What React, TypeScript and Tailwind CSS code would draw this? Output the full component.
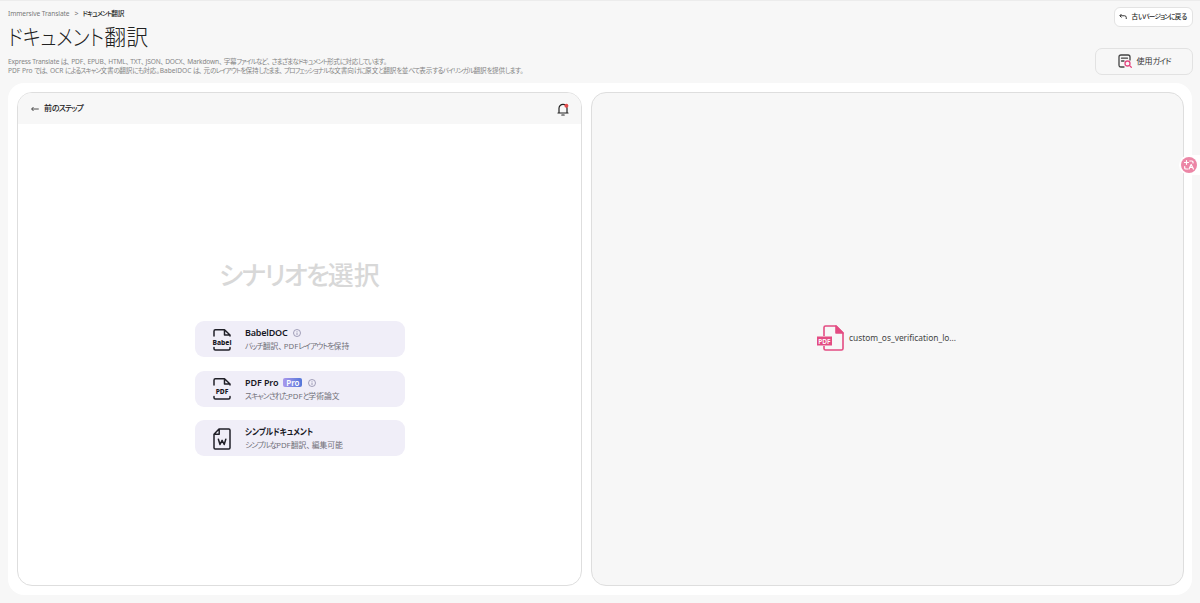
import type { ReactNode } from "react";

/** Sets kana runs tighter than the kanji and Latin text around them. */
function Ja({ children }: { children: string }) {
  const runs = children.split(/([ぁ-んァ-ヶー]+|、)/).filter(Boolean);
  return (
    <span>
      {runs.map((run, i) =>
        run === "、" ? (
          <span key={i} className="tracking-[-0.3em] [font-feature-settings:'palt'_0]">{run}</span>
        ) : /[ぁ-んァ-ヶー]/.test(run) ? (
          <span key={i} className="tracking-[-0.125em]">{run}</span>
        ) : (
          run
        ),
      )}
    </span>
  );
}

function InfoIcon() {
  return (
    <svg className="h-2 w-2 shrink-0" viewBox="0 0 16 16" fill="none" stroke="#8784a4" strokeWidth="1.5">
      <circle cx="8" cy="8" r="7" />
      <path d="M8 7v5M8 4v1.5" />
    </svg>
  );
}

function FoldedFile({ label }: { label: string }) {
  return (
    <svg className="h-6 w-[22px] shrink-0" viewBox="0 0 22 24" fill="none" stroke="#202028" strokeWidth="1.5" strokeLinejoin="round" strokeLinecap="round">
      <path d="M3 8V3.2Q3 1.8 4.4 1.8H13.5L19 7V8M13.5 2V7H19M3 19.5V20.8Q3 22 4.4 22H17.6Q19 22 19 20.8V19.5" />
      <text x="11" y="17.2" textAnchor="middle" fill="#17171f" stroke="none" fontFamily="Noto Sans, sans-serif" fontWeight="800" fontSize="6.7">
        {label}
      </text>
    </svg>
  );
}

function WordFile() {
  return (
    <svg className="h-6 w-[22px] shrink-0" viewBox="0 0 22 24" fill="none" stroke="#202028" strokeWidth="1.5" strokeLinejoin="round" strokeLinecap="round">
      <path d="M8 2H17.8Q19 2 19 3.2V20.8Q19 22 17.8 22H4.2Q3 22 3 20.8V7.2ZM8.2 2V7.3H3" />
      <path d="M7.4 12.2L9 17.5L11.1 13.4L13.2 17.5L14.8 12.2" />
    </svg>
  );
}

function Option({ icon, title, sub }: { icon: ReactNode; title: ReactNode; sub: string }) {
  return (
    <button className="flex h-9 w-[210px] items-center rounded-[9px] bg-[#f0eef8] pl-4 pt-px text-left">
      {icon}
      <span className="ml-3 flex flex-col">
        <span className="flex h-3.5 items-center whitespace-nowrap text-[9px] font-semibold leading-[14px] text-[#17171f]">{title}</span>
        <span className="h-[13px] whitespace-nowrap text-[7.8px] leading-[13px] text-[#717078]"><Ja>{sub}</Ja></span>
      </span>
    </button>
  );
}

export default function App() {
  return (
    <div className="flex h-[603px] w-[1200px] flex-col overflow-hidden border-t border-[#ececec] bg-[#f7f7f7] px-2 font-['Noto_Sans','Noto_Sans_CJK_JP',sans-serif] [font-feature-settings:'palt']">
      <header className="flex h-[82px] shrink-0 justify-between">
        <div className="pt-2">
          <nav className="flex h-[10px] items-center whitespace-nowrap text-[6.6px] leading-[10px] text-[#777]">
            <span className="tracking-[-0.08px]">Immersive Translate</span>
            <span className="ml-[5px] mr-1 text-[7px]">&gt;</span>
            <span className="font-medium text-[#222]"><Ja>ドキュメント翻訳</Ja></span>
          </nav>
          <h1 className="h-[34px] whitespace-nowrap text-[22px] font-light leading-[34px] text-[#222]">
            <span className="-mr-[16px] inline-block origin-left scale-x-[0.855]">ドキュメント</span>翻訳
          </h1>
          <p className="mt-[4px] whitespace-nowrap text-[6.6px] leading-[9px] text-[#858585]">
            <span className="block tracking-[-0.16px]"><Ja>Express Translate は、PDF、EPUB、HTML、TXT、JSON、DOCX、Markdown、字幕ファイルなど、さまざまなドキュメント形式に対応しています。</Ja></span>
            <span className="block"><Ja>PDF Pro では、OCR によるスキャン文書の翻訳にも対応。BabelDOC は、元のレイアウトを保持したまま、プロフェッショナルな文書向けに原文と翻訳を並べて表示するバイリンガル翻訳を提供します。</Ja></span>
          </p>
        </div>
        <div className="-mr-[0.5px] flex flex-col items-end pt-[6px]">
          <button className="flex h-5 w-[79px] items-center whitespace-nowrap rounded-[6px] border border-[#e3e3e3] bg-white pl-1 text-[6.6px] font-medium text-[#222]">
            <svg className="mr-[5px] h-2 w-2 shrink-0" viewBox="0 0 16 16" fill="none" stroke="#222" strokeWidth="1.8">
              <path d="M5 2L1.5 5.5L5 9M2 5.5H11Q14.5 5.5 14.5 9V12" />
            </svg>
            <Ja>古いバージョンに戻る</Ja>
          </button>
          <button className="mt-[21px] flex h-[27px] w-[98px] items-center whitespace-nowrap rounded-[7px] border border-[#e2e2e2] pb-[2px] pl-[22px] text-[8px] text-[#333]">
            <svg className="mr-[5px] mt-px h-[14px] w-[14px] shrink-0" viewBox="0 0 14 14" fill="none" stroke="#444" strokeWidth="1.3" strokeLinecap="round">
              <path d="M6 13H3Q1 13 1 11V3Q1 1 3 1H10Q12 1 12 3V6M3.5 4.2H9.5M3.5 7H6" />
              <path d="M11.4 11.4L13.3 13.3" stroke="#e34880" />
              <circle cx="9.5" cy="9.5" r="2.5" stroke="#e34880" />
            </svg>
            <Ja>使用ガイド</Ja>
          </button>
        </div>
      </header>

      <main className="flex h-[512px] shrink-0 gap-[9px] rounded-[16px] bg-white py-[9px] pl-[9px] pr-[8.5px]">
        <section className="flex w-[565px] shrink-0 flex-col overflow-hidden rounded-[15px] border border-[#dedede]">
          <div className="flex h-[31px] shrink-0 items-center justify-between bg-[#f7f7f7] px-[13px]">
            <button className="flex items-center whitespace-nowrap text-[8px] font-medium text-[#222]">
              <svg className="mr-[5px] h-2 w-2" viewBox="0 0 16 16" fill="none" stroke="#222" strokeWidth="1.6">
                <path d="M5 4L1.2 8L5 12M1.5 8H15.5" />
              </svg>
              <span className="-mt-px"><Ja>前のステップ</Ja></span>
            </button>
            <svg className="-mr-px mt-px h-[13px] w-3" viewBox="0 0 12 13" fill="none" stroke="#222" strokeWidth="1.2" strokeLinecap="round" strokeLinejoin="round">
              <path d="M2 10V5.3A4 4 0 0 1 10 5.3V10M1 10H11M4.8 12H7.2" />
              <circle cx="9.4" cy="2.7" r="2" fill="#e34c4c" stroke="none" />
            </svg>
          </div>
          <div className="flex flex-1 flex-col items-center pt-[131px]">
            <h2 className="h-10 whitespace-nowrap text-[26px] font-medium leading-10 text-[#d8d8d8]">
              <span className="tracking-[-1.9px]">シナリオを</span>選択
            </h2>
            <div className="ml-px mt-[26px] flex flex-col gap-[13.5px]">
              <Option
                icon={<FoldedFile label="Babel" />}
                title={<><span className="mr-[6px] tracking-[-0.2px]">BabelDOC</span><InfoIcon /></>}
                sub="バッチ翻訳、PDFレイアウトを保持"
              />
              <Option
                icon={<FoldedFile label="PDF" />}
                title={<><span className="mr-[5px] tracking-[-0.1px]">PDF Pro</span><span className="mr-[6px] flex h-[9px] w-[19px] items-center justify-center rounded-[2px] bg-linear-to-r from-[#aa98ec] to-[#5376d9] text-[8px] leading-[9px] text-white">Pro</span><InfoIcon /></>}
                sub="スキャンされたPDFと学術論文"
              />
              <Option
                icon={<WordFile />}
                title={<span className="-mr-3 inline-block origin-left scale-x-[0.84]">シンプルドキュメント</span>}
                sub="シンプルなPDF翻訳、編集可能"
              />
            </div>
          </div>
        </section>

        <section className="flex flex-1 items-center rounded-[15px] border border-[#dedede] bg-[#f7f7f7] pb-[3px] pl-[224px]">
          <svg className="mr-[5px] h-7 w-7 shrink-0" viewBox="0 0 28 28" fill="none" stroke="#e34c82" strokeWidth="1.6" strokeLinejoin="round">
            <path d="M8 12V3.5Q8 2 9.5 2H20L27 9V24.5Q27 26 25.5 26H9.5Q8 26 8 24.5V22" />
            <path d="M20 2V9H27Z" fill="#e34c82" />
            <rect x="1" y="12.5" width="15" height="9" fill="#e34c82" stroke="none" />
            <text x="8.5" y="19.5" textAnchor="middle" fill="white" stroke="none" fontFamily="Noto Sans, sans-serif" fontWeight="600" fontSize="6.5">PDF</text>
          </svg>
          <span className="whitespace-nowrap text-[8.4px] leading-3 text-[#444]">custom_os_verification_lo...</span>
        </section>
      </main>

      <button className="absolute left-[1179px] top-[155px] flex h-5 w-[21px] items-center rounded-l-full bg-white pl-[2px]">
        <svg className="h-4 w-4" viewBox="0 0 16 16" fill="none" stroke="white" strokeWidth="1.2" strokeLinecap="round" strokeLinejoin="round">
          <circle cx="8" cy="8" r="8" fill="#ec86a6" stroke="none" />
          <path d="M3.5 5.5H7.5M5.5 3.7V7.3M8.8 4H11Q12 4 12 5V6M3.7 9.5V11Q3.7 12 4.7 12H6.5M8 12L10.2 7.5L12.4 12M8.8 10.5H11.6" />
        </svg>
      </button>
    </div>
  );
}
